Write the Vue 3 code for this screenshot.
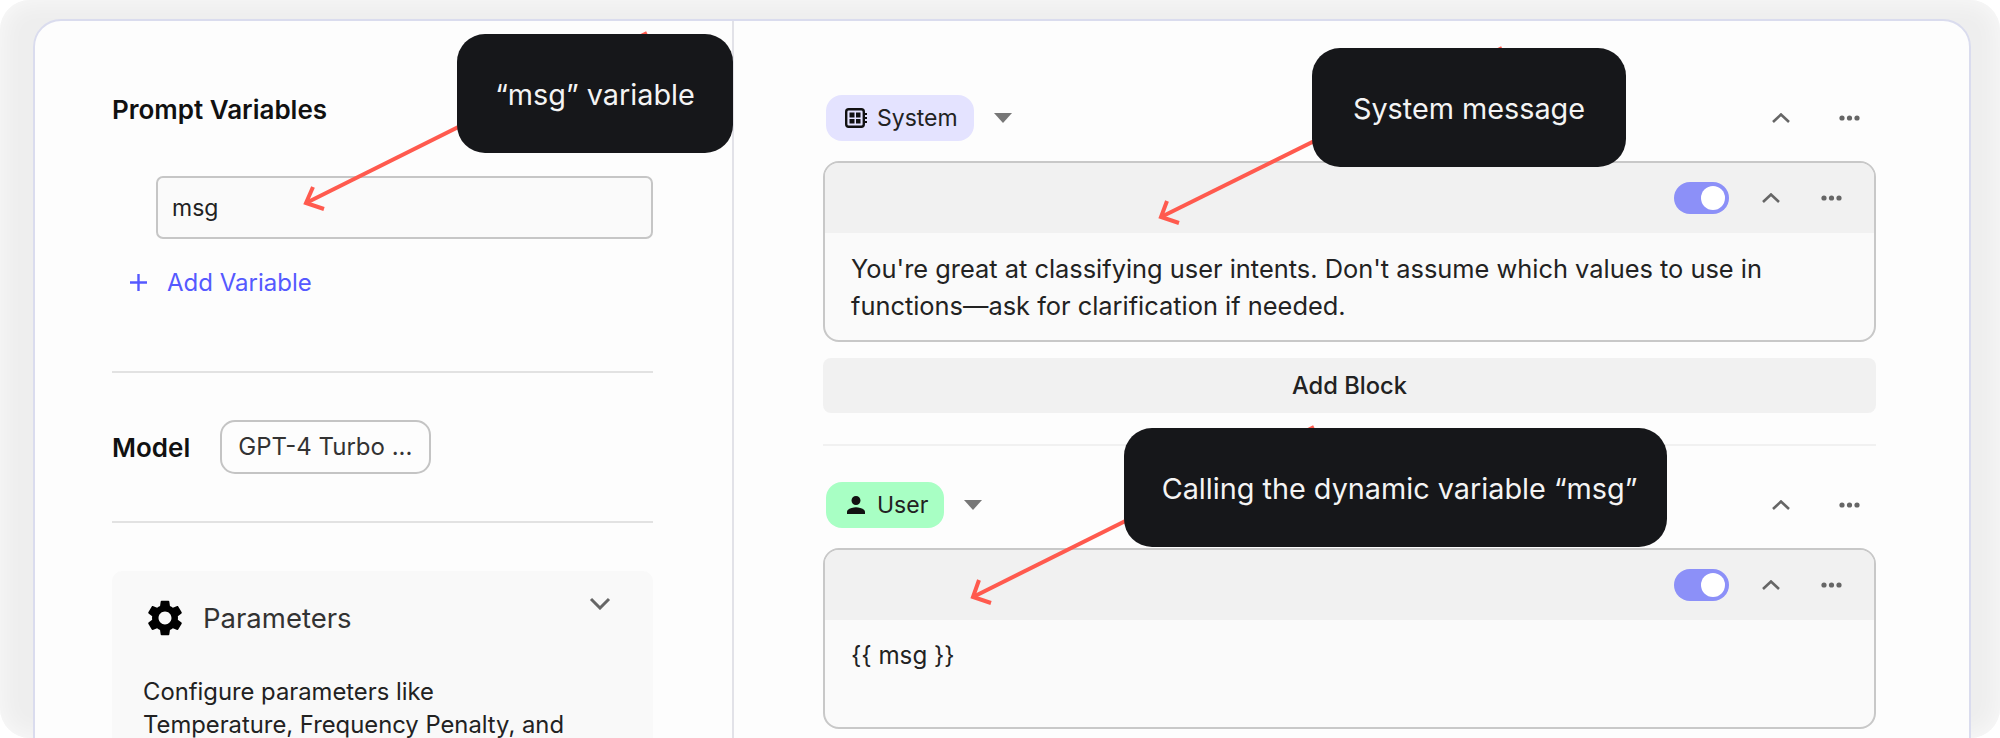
<script setup>
const blocks = [
  {
    role: 'System',
    kind: 'system',
    text: "You're great at classifying user intents. Don't assume which values to use in functions—ask for clarification if needed."
  },
  {
    role: 'User',
    kind: 'user',
    text: '{{ msg }}'
  }
]

const callouts = [
  { id: 'var', label: '“msg” variable' },
  { id: 'sys', label: 'System message' },
  { id: 'call', label: 'Calling the dynamic variable “msg”' }
]

const arrows = [
  { line: 'M647 33L306 203', head: 'M313 187L306 203L324 209' },
  { line: 'M1502 48L1161 217', head: 'M1167 201L1161 217L1179 223' },
  { line: 'M1314 427L973 597', head: 'M979 580L973 597L991 603' }
]
</script>

<template>
  <div class="shot">
    <div class="card">
      <aside class="side">
        <h3 class="side__title">Prompt Variables</h3>
        <div class="var-input">msg</div>
        <button class="add-var">
          <svg class="add-var__plus" viewBox="0 0 19 19" width="19" height="19">
            <path d="M9.5 1v17M1 9.5h17" fill="none" stroke="currentColor" stroke-width="2.4" />
          </svg>
          Add Variable
        </button>
        <hr class="rule rule--vars">
        <div class="model">
          <strong>Model</strong>
          <div class="model__select">GPT-4 Turbo ...</div>
        </div>
        <hr class="rule">
        <section class="params">
          <header class="params__head">
            <svg class="params__gear" viewBox="2.5 2 19 20" width="36" height="36">
              <path d="M19.14 12.94c.04-.3.06-.61.06-.94 0-.32-.02-.64-.07-.94l2.03-1.58c.18-.14.23-.41.12-.61l-1.92-3.32c-.12-.22-.37-.29-.59-.22l-2.39.96c-.5-.38-1.03-.7-1.62-.94l-.36-2.54c-.04-.24-.24-.41-.48-.41h-3.84c-.24 0-.43.17-.47.41l-.36 2.54c-.59.24-1.13.57-1.62.94l-2.39-.96c-.22-.08-.47 0-.59.22L2.74 8.87c-.12.21-.08.47.12.61l2.03 1.58c-.05.3-.09.63-.09.94s.02.64.07.94l-2.03 1.58c-.18.14-.23.41-.12.61l1.92 3.32c.12.22.37.29.59.22l2.39-.96c.5.38 1.03.7 1.62.94l.36 2.54c.05.24.24.41.48.41h3.84c.24 0 .44-.17.47-.41l.36-2.54c.59-.24 1.13-.56 1.62-.94l2.39.96c.22.08.47 0 .59-.22l1.92-3.32c.12-.22.07-.47-.12-.61l-2.01-1.58zM12 15.6c-1.98 0-3.6-1.62-3.6-3.6s1.62-3.6 3.6-3.6 3.6 1.62 3.6 3.6-1.62 3.6-3.6 3.6z" />
            </svg>
            <span>Parameters</span>
            <svg class="params__chevron" viewBox="0 0 22 13" width="22" height="13">
              <path d="M2 2l9 9 9-9" fill="none" stroke="#666" stroke-width="3" />
            </svg>
          </header>
          <p class="params__text">Configure parameters like Temperature, Frequency Penalty, and</p>
        </section>
      </aside>

      <main class="main">
        <template v-for="(block, i) in blocks" :key="block.kind">
          <hr v-if="i > 0" class="main__rule">
          <div class="role-row" :class="`role-row--${block.kind}`">
            <span class="role" :class="`role--${block.kind}`">
              <svg v-if="block.kind === 'system'" class="role__icon" viewBox="0 0 22 20" width="22" height="20">
                <rect x="1.2" y="1.2" width="17.6" height="17.6" rx="2.5" fill="none" stroke="#111" stroke-width="2.4" />
                <path d="M4.5 4.5h5v5h-5zM4.5 11h5v4.5h-5zM11 4.5h4.5v5H11zM11 11h4.5v4.5H11z" fill="#111" />
                <path d="M19 6h3M19 10h3M19 14h3" stroke="#111" stroke-width="1.8" />
              </svg>
              <svg v-else class="role__icon" viewBox="4 4 16 16" width="22" height="18">
                <path d="M12 12c2.21 0 4-1.79 4-4s-1.79-4-4-4-4 1.79-4 4 1.79 4 4 4zm0 2c-2.67 0-8 1.34-8 4v2h16v-2c0-2.66-5.33-4-8-4z" fill="#111" />
              </svg>
              {{ block.role }}
            </span>
            <svg class="role-row__caret" viewBox="0 0 18 10" width="18" height="10">
              <path d="M0 0h18L9 10z" fill="#777" />
            </svg>
            <div class="tools tools--outer">
              <svg viewBox="0 0 18 10" width="18" height="10">
                <path d="M1 9l8-7.5L17 9" fill="none" stroke="#666" stroke-width="2.6" />
              </svg>
              <svg class="tools__dots" viewBox="0 0 21 6" width="21" height="6">
                <circle cx="3" cy="3" r="2.6" fill="#666" />
                <circle cx="10.5" cy="3" r="2.6" fill="#666" />
                <circle cx="18" cy="3" r="2.6" fill="#666" />
              </svg>
            </div>
          </div>
          <div class="block" :class="`block--${block.kind}`">
            <div class="block__head">
              <span class="toggle"><span class="toggle__knob" /></span>
              <div class="tools">
                <svg viewBox="0 0 18 10" width="18" height="10">
                  <path d="M1 9l8-7.5L17 9" fill="none" stroke="#666" stroke-width="2.6" />
                </svg>
                <svg class="tools__dots" viewBox="0 0 21 6" width="21" height="6">
                  <circle cx="3" cy="3" r="2.6" fill="#666" />
                  <circle cx="10.5" cy="3" r="2.6" fill="#666" />
                  <circle cx="18" cy="3" r="2.6" fill="#666" />
                </svg>
              </div>
            </div>
            <p class="block__body">{{ block.text }}</p>
          </div>
          <button v-if="i === 0" class="add-block">Add Block</button>
        </template>
      </main>
    </div>

    <!-- annotations drawn on top of the screenshot -->
    <svg class="arrows" viewBox="0 0 2000 738" width="2000" height="738">
      <g v-for="a in arrows" :key="a.line" fill="none" stroke="#ff5a4e" stroke-width="4">
        <path :d="a.line" />
        <path :d="a.head" />
      </g>
    </svg>
    <div
      v-for="c in callouts"
      :key="c.id"
      class="callout"
      :class="`callout--${c.id}`"
    >
      {{ c.label }}
    </div>
  </div>
</template>

<style>
body {
  background: #fff;
}
</style>

<style scoped>
.shot {
  position: relative;
  width: 2000px;
  height: 738px;
  box-sizing: border-box;
  padding: 19px 29px 0 33px;
  background: #eeeeee;
  box-shadow: inset 0 0 26px rgba(255, 255, 255, 0.75);
  border-radius: 30px;
  overflow: hidden;
  font-family: Inter, 'Noto Sans', sans-serif;
  color: #1c1c1c;
}
.card {
  display: grid;
  grid-template-columns: 699px 1fr;
  height: 760px;
  box-sizing: border-box;
  background: #fdfdfd;
  border: 2px solid #dadcee;
  border-radius: 28px;
}
.side {
  box-sizing: border-box;
  padding: 74px 79px 0 77px;
  border-right: 2px solid #e2e2e8;
}
.side__title {
  margin: 0;
  font-size: 26px;
  line-height: 30px;
  font-weight: 600;
  color: #111;
}
.var-input {
  display: flex;
  align-items: center;
  box-sizing: border-box;
  height: 63px;
  margin: 51px 0 0 44px;
  padding: 0 14px;
  background: #fafafa;
  border: 2px solid #c6c6c6;
  border-radius: 7px;
  font-size: 23px;
  color: #222;
}
.add-var {
  display: flex;
  align-items: center;
  gap: 19px;
  margin: 27px 0 0 17px;
  padding: 0;
  height: 32px;
  background: none;
  border: 0;
  font: inherit;
  font-size: 24px;
  color: #5559ff;
}
.rule {
  height: 2px;
  margin: 0;
  border: 0;
  background: #e2e2e2;
}
.rule--vars {
  margin-top: 73px;
}
.model {
  display: flex;
  align-items: center;
  gap: 30px;
  height: 148px;
  font-size: 26px;
  color: #111;
}
.model strong {
  font-weight: 600;
}
.model__select {
  box-sizing: border-box;
  width: 211px;
  height: 54px;
  padding: 0 16px;
  line-height: 50px;
  white-space: nowrap;
  border: 2px solid #c4c4c4;
  border-radius: 15px;
  font-size: 24px;
  color: #333;
}
.params {
  margin-top: 48px;
  height: 300px;
  padding: 29px 31px;
  box-sizing: border-box;
  background: #f9f9f9;
  border-radius: 10px;
}
.params__head {
  display: flex;
  align-items: center;
  gap: 20px;
  margin-left: 4px;
  height: 36px;
  font-size: 27.5px;
  color: #333;
}
.params__head span {
  flex: 1;
}
.params__chevron {
  margin: -30px 11px 0 0;
}
.params__text {
  width: 436px;
  margin: 39px 0 0;
  font-size: 23.8px;
  line-height: 33px;
  color: #222;
}
.main {
  padding: 74px 93px 0 89px;
  min-width: 0;
}
.role-row {
  display: flex;
  align-items: center;
  height: 46px;
  margin-bottom: 20px;
}
.role {
  display: flex;
  align-items: center;
  gap: 10px;
  height: 46px;
  padding: 0 16px 0 19px;
  border-radius: 16px;
  font-size: 23px;
  color: #222;
  margin-left: 3px;
}
.role--system {
  background: #e4e3ff;
}
.role--user {
  background: #a8ffc4;
}
.role-row__caret {
  margin-left: 20px;
}
.tools {
  display: flex;
  align-items: center;
  gap: 41px;
  margin-left: 33px;
}
.tools--outer {
  margin-left: auto;
  margin-right: 16px;
  gap: 49px;
}
.block {
  box-sizing: border-box;
  height: 181px;
  border: 2px solid #c8c8c8;
  border-radius: 16px;
  background: #fafafa;
  overflow: hidden;
}
.block__head {
  display: flex;
  align-items: center;
  justify-content: flex-end;
  box-sizing: border-box;
  height: 70px;
  padding: 0 32px 0 0;
  background: #f1f1f1;
}
.block__body {
  margin: 0;
  padding: 17px 60px 17px 26px;
  line-height: 37px;
  color: #222;
}
.block--system .block__body {
  font-size: 25.4px;
}
.block--user .block__body {
  font-size: 24.2px;
}
.toggle {
  display: flex;
  align-items: center;
  justify-content: flex-end;
  width: 55px;
  height: 32px;
  padding-right: 4px;
  box-sizing: border-box;
  border-radius: 16px;
  background: #8c90f8;
}
.toggle__knob {
  width: 24px;
  height: 24px;
  border-radius: 50%;
  background: #fff;
}
.add-block {
  display: block;
  width: 100%;
  height: 55px;
  margin-top: 16px;
  padding: 0;
  border: 0;
  border-radius: 8px;
  background: #f1f1f1;
  font: inherit;
  font-size: 23.7px;
  font-weight: 500;
  color: #222;
}
.main__rule {
  height: 2px;
  margin: 31px 0 36px;
  border: 0;
  background: #f1f1f1;
}
.arrows {
  position: absolute;
  left: 0;
  top: 0;
  pointer-events: none;
}
.callout {
  position: absolute;
  display: flex;
  justify-content: center;
  align-items: flex-start;
  box-sizing: border-box;
  height: 119px;
  padding-top: 43px;
  background: #16171a;
  border-radius: 28px;
  font-size: 28.8px;
  line-height: 35px;
  white-space: nowrap;
  color: #f4f4f4;
}
.callout--var {
  left: 457px;
  top: 34px;
  width: 276px;
}
.callout--sys {
  left: 1312px;
  top: 48px;
  width: 314px;
}
.callout--call {
  left: 1124px;
  top: 428px;
  width: 543px;
  padding-left: 8px;
}
</style>
